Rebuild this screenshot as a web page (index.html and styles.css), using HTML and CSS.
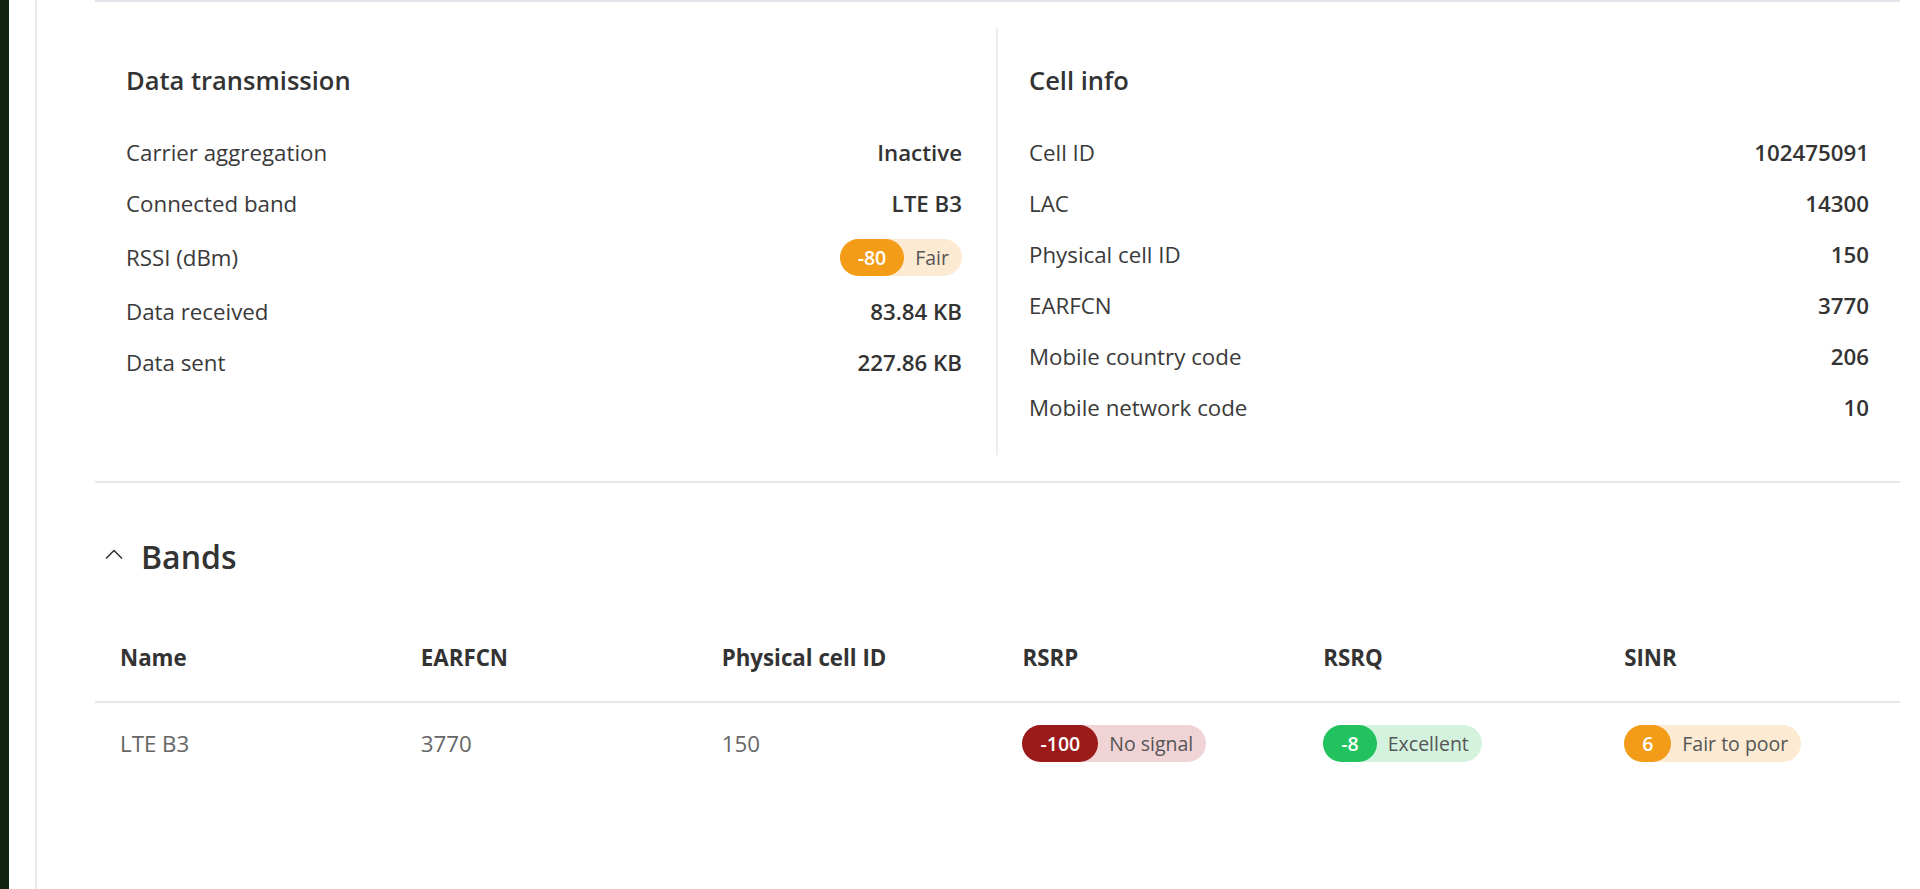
FILE: index.html
```html
<!DOCTYPE html>
<html lang="en">
<head>
<meta charset="utf-8">
<title>Mobile status</title>
<link rel="stylesheet" href="styles.css">
</head>
<body>
<div class="app">
  <div class="rail"></div>
  <div class="side"></div>
  <main class="main">
    <div class="card">
      <div class="info-grid">
        <section class="info-col">
          <h2 class="col-title">Data transmission</h2>
          <div class="kv"><span class="k">Carrier aggregation</span><span class="v">Inactive</span></div>
          <div class="kv"><span class="k">Connected band</span><span class="v">LTE B3</span></div>
          <div class="kv kv-pill"><span class="k">RSSI (dBm)</span><span class="pill pill-orange"><span class="num">-80</span><span class="lbl">Fair</span></span></div>
          <div class="kv"><span class="k">Data received</span><span class="v">83.84 KB</span></div>
          <div class="kv"><span class="k">Data sent</span><span class="v">227.86 KB</span></div>
        </section>
        <section class="info-col info-col-right">
          <h2 class="col-title">Cell info</h2>
          <div class="kv"><span class="k">Cell ID</span><span class="v">102475091</span></div>
          <div class="kv"><span class="k">LAC</span><span class="v">14300</span></div>
          <div class="kv"><span class="k">Physical cell ID</span><span class="v">150</span></div>
          <div class="kv"><span class="k">EARFCN</span><span class="v">3770</span></div>
          <div class="kv"><span class="k">Mobile country code</span><span class="v">206</span></div>
          <div class="kv"><span class="k">Mobile network code</span><span class="v">10</span></div>
        </section>
      </div>

      <div class="bands-head">
        <svg class="chev" width="20" height="12" viewBox="0 0 20 12" aria-hidden="true"><path d="M2.5 10 L10 2.5 L17.5 10" fill="none" stroke="#333" stroke-width="1.6" stroke-linecap="round" stroke-linejoin="round"/></svg>
        <h2 class="bands-title">Bands</h2>
      </div>

      <table class="bands">
        <thead>
          <tr><th>Name</th><th>EARFCN</th><th>Physical cell ID</th><th>RSRP</th><th>RSRQ</th><th>SINR</th></tr>
        </thead>
        <tbody>
          <tr>
            <td>LTE B3</td>
            <td>3770</td>
            <td>150</td>
            <td><span class="pill pill-red"><span class="num">-100</span><span class="lbl">No signal</span></span></td>
            <td><span class="pill pill-green"><span class="num">-8</span><span class="lbl">Excellent</span></span></td>
            <td><span class="pill pill-orange"><span class="num">6</span><span class="lbl">Fair to poor</span></span></td>
          </tr>
        </tbody>
      </table>
    </div>
  </main>
</div>
</body>
</html>
```

FILE: styles.css
```css
* { box-sizing: border-box; }
html, body { margin: 0; padding: 0; background: #fff; }
body {
  font-family: "Open Sans", "Noto Sans", sans-serif;
  color: #333;
  height: 889px;
  overflow: hidden;
}
.app { display: flex; min-height: 889px; }
.rail { width: 9px; background: #0e220f; flex: none; }
.side { width: 28px; flex: none; border-right: 2px solid #e9e9ec; }
.main { flex: 1; padding: 0 20px 0 58px; }
.card { border-top: 2px solid #e3e3ea; }

.info-grid {
  display: grid;
  grid-template-columns: 901px 1fr;
  margin-top: 26px;
  padding-bottom: 26px;
  border-bottom: 2px solid #e8e8ec;
}
.info-col { padding: 36px 34px 22px 31px; }
.info-col-right { border-left: 2px solid #ededf0; padding-left: 31px; padding-right: 31px; }
.col-title {
  margin: 0 0 31px;
  font-size: 25.5px;
  line-height: 32px;
  font-weight: 600;
  color: #333;
}
.kv {
  display: flex;
  justify-content: space-between;
  align-items: center;
  height: 51px;
  font-size: 22.3px;
}
.kv-pill { height: 57px; }
.k { color: #3a3a3a; }
.v { font-weight: 600; color: #333; }

.pill {
  display: inline-flex;
  align-items: center;
  height: 37px;
  border-radius: 19px;
  font-size: 19.5px;
  line-height: 37px;
  white-space: nowrap;
}
.pill .num {
  height: 37px;
  border-radius: 19px;
  padding: 0 18px;
  color: #fff;
  font-weight: 600;
}
.pill .lbl { padding: 0 13px 0 11px; color: #555; }
.pill-orange { background: #fcebd2; }
.pill-orange .num { background: #f29c17; }
.pill-red { background: #f0d3d5; }
.pill-red .num { background: #9b1b1b; }
.pill-green { background: #d4f3df; }
.pill-green .num { background: #22c35e; }

.bands-head {
  display: flex;
  align-items: center;
  gap: 17px;
  padding: 54px 0 0 9px;
}
.chev { display: block; margin-top: -6px; }
.bands-title {
  margin: 0;
  font-size: 32px;
  line-height: 40px;
  font-weight: 600;
  color: #333;
}

.bands {
  width: 100%;
  margin-top: 37px;
  border-collapse: collapse;
  table-layout: fixed;
  font-size: 22.3px;
}
.bands th {
  text-align: left;
  font-weight: 700;
  color: #333;
  height: 88px;
  padding: 0 25px;
  border-bottom: 2px solid #e6e6ea;
}
.bands td {
  height: 82px;
  padding: 0 25px;
  color: #666;
  vertical-align: middle;
}
```
